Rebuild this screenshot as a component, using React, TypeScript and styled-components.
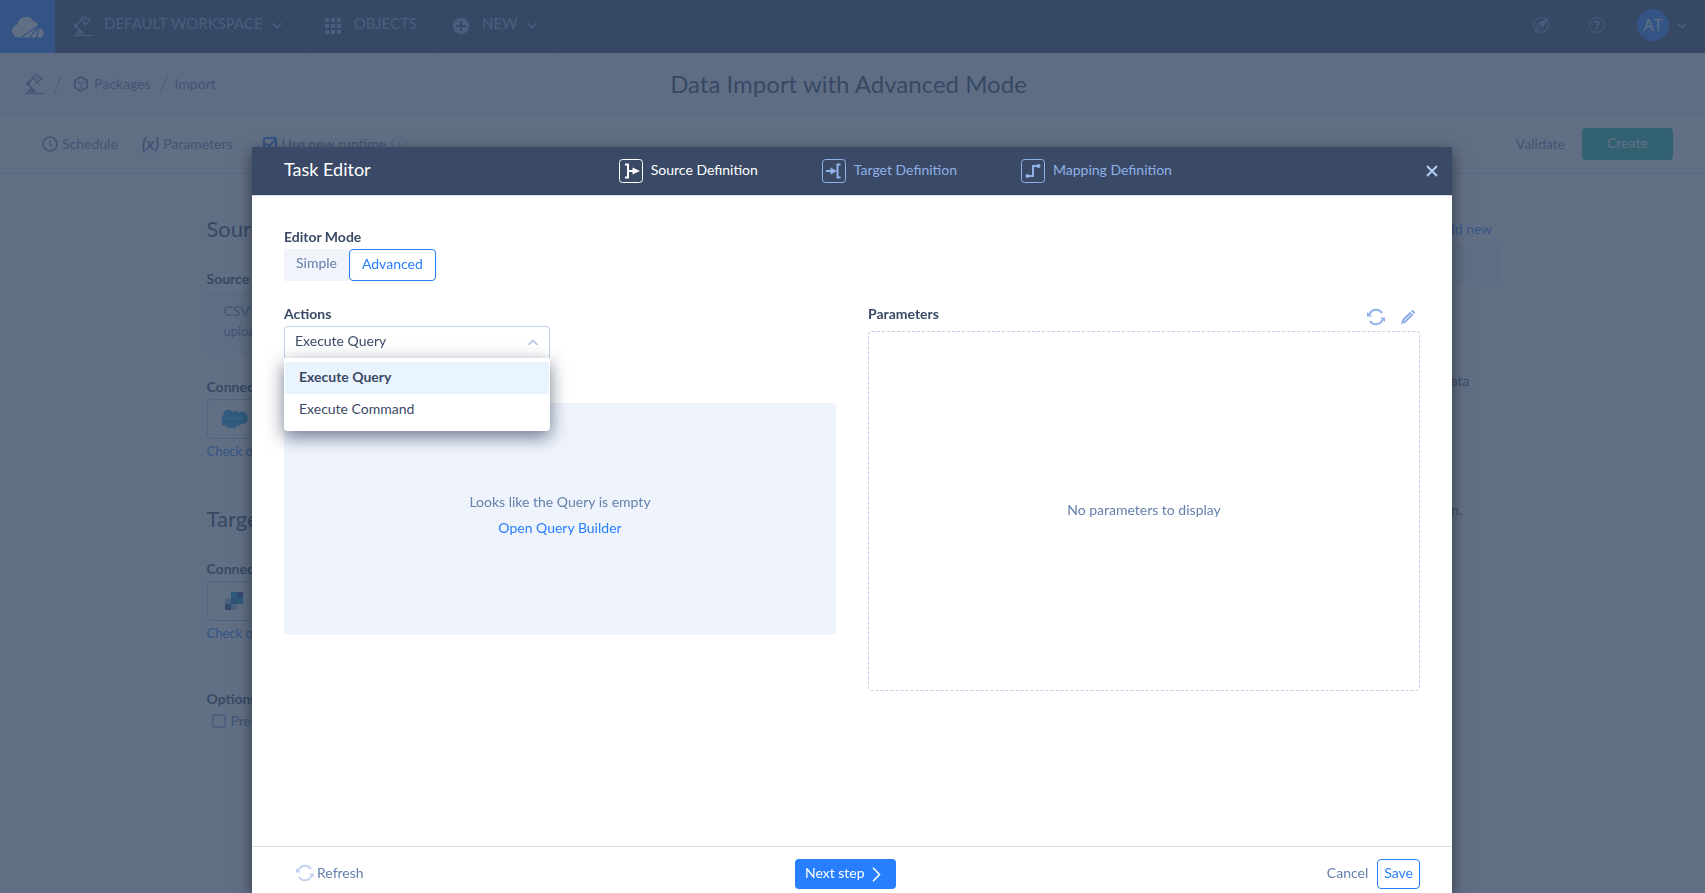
import React, { useState } from "react";
import styled, { createGlobalStyle, css } from "styled-components";

const Global = createGlobalStyle`
  *, *::before, *::after { box-sizing: border-box; }
  html, body, #root { height: 100%; }
  body { margin: 0; overflow: hidden; background: #fff; color: #3a4a66; font: 14px/20px Lato, "Liberation Sans", sans-serif; }
  button, input, select { font: inherit; color: inherit; }
  button { background: none; border: 0; padding: 0; cursor: pointer; }
  a { color: #277fff; text-decoration: none; }
  h1, h2, h3, p, ul { margin: 0; padding: 0; font-weight: 400; }
  svg { display: block; flex: none; }
`;

/* ---------- page behind the dialog ---------- */
const Page = styled.div`
  min-height: 100%;
`;
const TopBar = styled.header`
  display: flex;
  height: 53px;
  background: #3a4a66;
  color: #8eabdf;
`;
const Logo = styled.a`
  display: grid;
  place-items: center;
  width: 55px;
  background: #277fff;
`;
const NavButton = styled.button<{ $end?: number }>`
  display: flex;
  align-items: center;
  padding: 0 ${(p) => p.$end ?? 22}px 8px 18px;
  border-right: 1px solid #4a5c7c;
  font-size: 15px;
  > svg { margin-top: 6px; }
  > span { margin-left: 11px; }
  > span + svg { margin-left: 9px; }
`;
const NavRight = styled.div`
  display: flex;
  align-items: center;
  margin-left: auto;
  padding: 0 18px 3px 0;
`;
const IconButton = styled.button<{ $gap?: number }>`
  display: grid;
  place-items: center;
  color: inherit;
  margin-right: ${(p) => p.$gap ?? 0}px;
`;
const Avatar = styled.span`
  display: grid;
  place-items: center;
  width: 32px;
  height: 32px;
  margin-right: 8px;
  border-radius: 50%;
  background: #277fff;
  color: #fff;
  font-family: "Open Sans", sans-serif;
  font-size: 16px;
`;
const TitleBar = styled.div`
  display: grid;
  grid-template-columns: 1fr auto 1fr;
  align-items: center;
  height: 64px;
  padding: 0 33px 2px 25px;
  background: #f0f4fb;
`;
const Crumbs = styled.nav`
  display: flex;
  align-items: center;
  color: #6480ad;
  a { display: flex; align-items: center; gap: 5px; color: inherit; }
  a ~ a { margin-left: 4px; }
`;
const PageTitle = styled.h1`
  font-size: 24px;
  line-height: 32px;
`;
const Toolbar = styled.div`
  display: flex;
  align-items: center;
  height: 57px;
  padding: 0 32px 2px 42px;
  border-bottom: 1px solid #d3dbe9;
  color: #6480ad;
`;
const ToolbarEnd = styled.div`
  display: flex;
  align-items: center;
  gap: 17px;
  margin-left: auto;
`;
const Tool = styled.button`
  display: flex;
  align-items: center;
  gap: 4px;
  margin-right: 24px;
`;
const Variable = styled.b`
  font-style: italic;
  font-size: 17px;
  font-weight: 700;
`;
const Tick = styled.input`
  appearance: none;
  width: 14px;
  height: 14px;
  margin: 0;
  border: 2px solid #a9bddf;
  border-radius: 2px;
`;
const RuntimeLabel = styled.label`
  display: flex;
  align-items: center;
  gap: 5px;
  margin-left: 6px;
`;
const RuntimeTick = styled.span`
  display: grid;
  width: 14px;
  > * { grid-area: 1 / 1; }
  input:checked { border-color: #277fff; }
  svg { color: #277fff; }
`;
const CreateButton = styled.button`
  width: 91px;
  height: 32px;
  padding-bottom: 2px;
  border-radius: 4px;
  background: #23bea0;
  color: #fff;
`;
const Content = styled.main`
  display: grid;
  grid-template-columns: 1fr 1fr;
  max-width: 1292px;
  margin: 0 auto;
  padding-top: 39px;
`;
const Section = styled.section<{ $top?: number }>`
  display: flex;
  flex-direction: column;
  align-items: flex-start;
  margin: ${(p) => p.$top ?? 0}px 0 42px;
`;
const SectionTitle = styled.h2`
  font-size: 22px;
  line-height: 32px;
  margin-bottom: 24px;
`;
const FieldLabel = styled.h3`
  font-size: 14px;
  line-height: 20px;
  font-weight: 700;
  margin-bottom: 2px;
`;
const SourceCard = styled.div`
  width: 600px;
  height: 63px;
  margin-bottom: 23px;
  padding: 10px 17px;
  background: #eef3f9;
  color: #6480ad;
  small { display: block; font-size: 13px; line-height: 20px; }
`;
const Connection = styled.button`
  display: flex;
  align-items: center;
  width: 600px;
  height: 40px;
  margin-bottom: 2px;
  padding: 0 14px;
  border: 1px solid #b4c7e7;
  border-radius: 4px;
`;
const HelpLink = styled.a`
  font-size: 13px;
`;
const Option = styled.label`
  display: flex;
  align-items: center;
  gap: 5px;
  padding: 0 5px;
  color: #6480ad;
`;
const Aside = styled.aside`
  display: flex;
  flex-direction: column;
  align-items: flex-end;
  padding-top: 6px;
  font-family: "Open Sans", "Noto Sans", sans-serif;
  font-size: 13px;
`;
const AsideLink = styled.a`
  margin: 0 7px 7px 0;
`;
const AsideStrip = styled.div`
  width: 100%;
  height: 36px;
  background: #eef3f9;
`;
const AsideText = styled.p`
  padding: 89px 29px 0 0;
  & + & { padding: 109px 36px 0 0; }
`;

/* ---------- dialog ---------- */
const Overlay = styled.div`
  position: fixed;
  inset: 0;
  display: flex;
  justify-content: center;
  padding: 147px 1px 0 0;
  background: rgba(54, 72, 100, 0.79);
`;
const Dialog = styled.div`
  display: flex;
  flex-direction: column;
  width: 1200px;
  max-width: 100%;
  background: #fff;
  box-shadow: 0 5px 15px rgba(0, 0, 0, 0.5);
`;
const DialogHeader = styled.header`
  display: flex;
  align-items: center;
  justify-content: space-between;
  height: 48px;
  padding: 0 8px 0 32px;
  background: #3a4a66;
`;
const DialogTitle = styled.h2`
  color: #fff;
  font-size: 18px;
  line-height: 24px;
  padding-bottom: 4px;
`;
const Steps = styled.nav`
  display: flex;
  gap: 64px;
`;
const Step = styled.button<{ $on?: boolean }>`
  display: flex;
  align-items: center;
  gap: 8px;
  color: ${(p) => (p.$on ? "#fff" : "#90b0e8")};
  span { padding-bottom: 2px; }
`;
const Close = styled.button`
  display: grid;
  place-items: center;
  width: 24px;
  height: 24px;
  color: #b4cdf5;
`;
const DialogBody = styled.div`
  flex: 1;
  display: grid;
  grid-template-columns: 1fr 1fr;
  grid-template-rows: auto auto 1fr;
  column-gap: 32px;
  padding: 31px 32px 32px;
  border-top: 1px solid #d9e1ef;
`;
const Mode = styled.div`
  grid-column: 1 / -1;
  margin-bottom: 23px;
`;
const Label = styled.label`
  display: block;
  font-weight: 700;
  margin-bottom: 2px;
`;
const Segments = styled.div`
  display: flex;
`;
const Segment = styled.button<{ $on?: boolean }>`
  height: 32px;
  padding: 0 12px 4px;
  background: #f1f4fa;
  color: #6480ad;
  ${(p) =>
    p.$on &&
    css`
      padding: 0 12px 2px;
      border: 1px solid #277fff;
      border-radius: 4px;
      background: #fff;
      color: #277fff;
    `}
`;
const Combo = styled.div`
  position: relative;
  width: 266px;
  margin-bottom: 45px;
`;
const ComboButton = styled.button`
  display: flex;
  align-items: center;
  justify-content: space-between;
  width: 100%;
  height: 32px;
  padding: 0 11px 4px 10px;
  border: 1px solid #c1d0eb;
  border-bottom: 0;
  border-radius: 4px 4px 0 0;
  color: #3a4a66;
  svg { margin-top: 3px; color: #a9c0e8; }
`;
const Menu = styled.ul`
  position: absolute;
  top: 100%;
  left: 0;
  right: 0;
  z-index: 2;
  padding: 4px 1px 5px;
  list-style: none;
  background: #fff;
  border-radius: 0 0 4px 4px;
  box-shadow: 0 6px 18px rgba(35, 50, 80, 0.65);
`;
const MenuItem = styled.li<{ $on?: boolean }>`
  height: 32px;
  padding: 5px 14px;
  background: ${(p) => (p.$on ? "#eaf4ff" : "#fff")};
  font-weight: ${(p) => (p.$on ? 700 : 400)};
`;
const Empty = styled.div`
  display: flex;
  flex-direction: column;
  align-items: center;
  justify-content: center;
  gap: 6px;
  height: 232px;
  padding-bottom: 8px;
  border-radius: 4px;
  background: #eff4fc;
  color: #6480ad;
`;
const ParamHead = styled.div`
  display: flex;
  justify-content: space-between;
  align-items: flex-start;
  height: 27px;
`;
const ParamTools = styled.div`
  display: flex;
  align-items: center;
  gap: 16px;
  padding: 4px 5px 0 0;
  color: #90b0e8;
`;
const ParamBox = styled.div`
  display: grid;
  place-items: center;
  height: 360px;
  padding-bottom: 2px;
  border: 1px dashed #bdd0e8;
  border-radius: 4px;
  color: #6480ad;
`;
const DialogFooter = styled.footer`
  display: flex;
  justify-content: space-between;
  align-items: center;
  padding: 12px 32px 4px 44px;
  border-top: 1px solid #d9dee8;
  color: #6480ad;
`;
const RefreshButton = styled.button`
  display: flex;
  align-items: center;
  gap: 3px;
  padding-bottom: 2px;
  svg { color: #c3d3ee; }
`;
const Next = styled.button`
  display: flex;
  align-items: center;
  gap: 7px;
  height: 30px;
  padding: 0 15px 0 10px;
  border-radius: 4px;
  background: #277fff;
  color: #fff;
  span { padding-bottom: 2px; }
`;
const FooterEnd = styled.div`
  display: flex;
  align-items: center;
  gap: 9px;
`;
const Cancel = styled.button`
  height: 30px;
  padding-bottom: 2px;
`;
const Save = styled.button`
  height: 30px;
  padding: 0 6px 2px;
  border: 1px solid #277fff;
  border-radius: 4px;
  color: #277fff;
`;

/* ---------- icons ---------- */
const Lamp = () => (
  <svg width="20" height="20" viewBox="0 0 20 20" fill="none" stroke="currentColor">
    <path d="M0 19.500h20" />
    <path d="M3 9.500l5.200-5.500M3 10l4.500 5.500" strokeWidth="1.500" />
    <circle cx="3" cy="9.500" r="2.100" fill="currentColor" stroke="none" />
    <path d="M3.500 17.500c.5-1.600 2-2.300 3.500-2.300s2.800.8 3.200 2.300z" strokeWidth="1.300" />
    <path d="M8 4l1.500-2.700 2.300-.2 1.500 1.700 3.700 1.400-5.500 5-1-4.200z" strokeWidth="1.300" />
  </svg>
);
const Chevron = ({ up }: { up?: boolean }) => (
  <svg width="10" height="7" viewBox="0 0 10 7" fill="none" stroke="currentColor" strokeWidth="1.600">
    <path d={up ? "M.6 5.700L5 1.300l4.400 4.400" : "M.6 1.200L5 5.600l4.400-4.400"} />
  </svg>
);
const Slash = () => (
  <svg width="24" height="20" viewBox="0 0 24 20" stroke="#a9bddf" strokeWidth="1.500">
    <path d="M9.500 19.500l7-19" />
  </svg>
);
const Refresh = () => (
  <svg width="18" height="18" viewBox="0 0 18 18" fill="none" stroke="currentColor" strokeWidth="2">
    <path d="M2.500 6.500A7 7 0 0 1 15 5M15.500 11.500A7 7 0 0 1 3 13" />
    <path d="M0 4v4.500h5zM18 14V9.500h-5z" fill="currentColor" stroke="none" />
  </svg>
);
const StepIcon = ({ children }: { children: React.ReactNode }) => (
  <svg width="24" height="24" viewBox="0 0 24 24" fill="none" stroke="currentColor">
    <rect x=".5" y=".5" width="23" height="23" rx="3" />
    {children}
  </svg>
);

export default function App() {
  const [mode, setMode] = useState("Advanced");
  const [action, setAction] = useState("Execute Query");
  return (
    <>
      <Global />
      <Page>
        <TopBar>
          <Logo href="#" aria-label="Home">
            <svg width="32" height="22" viewBox="0 0 32 22">
              <path fill="#fff" d="M6 21.500A6.500 6.500 0 0 1 5.500 8.600a8.500 8.500 0 0 1 15.800-3.500 6.500 6.500 0 0 1 5.500 6.900A5 5 0 0 1 31.500 17c0 2.500-1 4.500-3 4.500z" />
              <path d="M8 22L27.500 9M17.500 22L27.500 9.500M24.500 22L27.500 9.500" stroke="#277fff" strokeWidth="1.300" />
            </svg>
          </Logo>
          <NavButton>
            <Lamp />
            <span>DEFAULT WORKSPACE</span>
            <Chevron />
          </NavButton>
          <NavButton $end={15}>
            <svg width="20" height="16" viewBox="0 0 20 16" fill="currentColor">
              {[0, 6, 12].map((y) => [2, 8, 14].map((x) => <rect key={`${x}-${y}`} x={x} y={y} width="4" height="4" />))}
            </svg>
            <span>OBJECTS</span>
          </NavButton>
          <NavButton>
            <svg width="20" height="16" viewBox="0 0 20 16">
              <circle cx="10" cy="8" r="8" fill="currentColor" />
              <path d="M10 3v10M5 8h10" stroke="#3a4a66" strokeWidth="2" />
            </svg>
            <span>NEW</span>
            <Chevron />
          </NavButton>
          <NavRight>
            <IconButton aria-label="Explore" $gap={40}>
              <svg width="16" height="16" viewBox="0 0 16 16" fill="none" stroke="currentColor">
                <circle cx="8" cy="8" r="7.400" />
                <path d="M14.500 1.500L9.800 10 6 6.200z" fill="currentColor" />
                <path d="M6 6.200L2 14l7.800-4" />
              </svg>
            </IconButton>
            <IconButton aria-label="Help" $gap={32}>
              <svg width="16" height="16" viewBox="0 0 16 16" fill="none" stroke="currentColor">
                <circle cx="8" cy="8" r="7.400" />
                <path d="M6 6.500c0-2.800 4-2.600 4-.3 0 1.500-2 1.300-2 3M8 10.500v1.700" strokeWidth="1.600" />
              </svg>
            </IconButton>
            <Avatar>AT</Avatar>
            <IconButton aria-label="Account menu">
              <Chevron />
            </IconButton>
          </NavRight>
        </TopBar>
        <TitleBar>
          <Crumbs>
            <a href="#" aria-label="Workspace"><Lamp /></a>
            <Slash />
            <a href="#">
              <svg width="16" height="16" viewBox="0 0 16 16" fill="none" stroke="currentColor" strokeWidth="1.800">
                <path d="M8 1l6.200 3.500v7L8 15l-6.200-3.500v-7z" />
                <path d="M4 5.800L8 8l4-2.200M8 8v5" strokeWidth="1" />
              </svg>
              Packages
            </a>
            <Slash />
            <span>Import</span>
          </Crumbs>
          <PageTitle>Data Import with Advanced Mode</PageTitle>
        </TitleBar>
        <Toolbar>
          <Tool>
            <svg width="16" height="16" viewBox="0 0 16 16" fill="none" stroke="currentColor" strokeWidth="1.700">
              <circle cx="8" cy="8" r="7" />
              <path d="M8 4v4.300l2.500 2" strokeWidth="1.200" />
            </svg>
            Schedule
          </Tool>
          <Tool><Variable>(x)</Variable>Parameters</Tool>
          <RuntimeLabel>
            <RuntimeTick>
              <Tick type="checkbox" defaultChecked />
              <svg width="14" height="14" viewBox="0 0 14 14" fill="none" stroke="currentColor" strokeWidth="2">
                <path d="M3 6.500l3 3L13 2" />
              </svg>
            </RuntimeTick>
            Use new runtime
            <svg width="16" height="16" viewBox="0 0 16 16" fill="none" stroke="#a9bddf">
              <circle cx="8" cy="8" r="7.300" />
              <path d="M8 7v5M8 4v1.500" strokeWidth="1.300" />
            </svg>
          </RuntimeLabel>
          <ToolbarEnd>
            <button>Validate</button>
            <CreateButton>Create</CreateButton>
          </ToolbarEnd>
        </Toolbar>
        <Content>
          <div>
            <Section>
              <SectionTitle>Source</SectionTitle>
              <FieldLabel>Source type</FieldLabel>
              <SourceCard>CSV<small>upload</small></SourceCard>
              <FieldLabel>Connection</FieldLabel>
              <Connection aria-label="Salesforce connection">
                <svg width="26" height="18" viewBox="0 0 26 18">
                  <path fill="#10a0dd" d="M5 15.500A5 5 0 0 1 1.500 6 5 5 0 0 1 10.500 2a5 5 0 0 1 6.500.8A5.300 5.300 0 0 1 25.500 8a5 5 0 0 1-6 5.800 4 4 0 0 1-5 1.600 4.500 4.500 0 0 1-9.500.1z" />
                  <path d="M4 8.500h18" stroke="#8fd0f0" strokeWidth="1.500" strokeDasharray="1.500 .7" />
                </svg>
              </Connection>
              <HelpLink href="#">Check out</HelpLink>
            </Section>
            <Section>
              <SectionTitle>Target</SectionTitle>
              <FieldLabel>Connection</FieldLabel>
              <Connection aria-label="Target connection">
                <svg width="24" height="18" viewBox="0 0 24 18">
                  <path fill="#10a0cc" d="M9 0h6v6H9zM15 6h6v6h-6z" />
                  <path fill="#2f4f90" d="M15 0h6v6h-6zM3 12h6v6H3z" />
                  <path fill="#1c79b8" d="M9 6h6v6H9z" />
                  <path fill="#8fc0dd" d="M3 6h6v6H3zM9 12h6v6H9z" />
                </svg>
              </Connection>
              <HelpLink href="#">Check out</HelpLink>
            </Section>
            <Section $top={46}>
              <FieldLabel>Options</FieldLabel>
              <Option><Tick type="checkbox" />Preserve</Option>
            </Section>
          </div>
          <Aside>
            <AsideLink href="#">Add new</AsideLink>
            <AsideStrip />
            <AsideText>data</AsideText>
            <AsideText>connection.</AsideText>
          </Aside>
        </Content>
      </Page>

      <Overlay>
        <Dialog role="dialog" aria-labelledby="dialog-title">
          <DialogHeader>
            <DialogTitle id="dialog-title">Task Editor</DialogTitle>
            <Steps>
              <Step $on>
                <StepIcon>
                  <path d="M6 5.500h3v13H6M9 12h6" strokeWidth="2" />
                  <path d="M13.500 8.500L21 12l-7.500 3.500z" fill="currentColor" stroke="none" />
                </StepIcon>
                <span>Source Definition</span>
              </Step>
              <Step>
                <StepIcon>
                  <path d="M18.500 5.500h-3v13h3M4 12h6" strokeWidth="2" />
                  <path d="M8.500 8.500L15 12l-6.500 3.500z" fill="currentColor" stroke="none" />
                </StepIcon>
                <span>Target Definition</span>
              </Step>
              <Step>
                <StepIcon>
                  <path d="M6.500 17h5.500V7h5.500" strokeWidth="2" />
                  <circle cx="6.500" cy="17" r="2" fill="currentColor" stroke="none" />
                  <circle cx="17.500" cy="7" r="2" fill="currentColor" stroke="none" />
                </StepIcon>
                <span>Mapping Definition</span>
              </Step>
            </Steps>
            <Close aria-label="Close">
              <svg width="12" height="12" viewBox="0 0 12 12" stroke="currentColor" strokeWidth="2">
                <path d="M1 1l10 10M11 1L1 11" />
              </svg>
            </Close>
          </DialogHeader>
          <DialogBody>
            <Mode>
              <Label as="div">Editor Mode</Label>
              <Segments>
                {["Simple", "Advanced"].map((m) => (
                  <Segment key={m} $on={m === mode} onClick={() => setMode(m)}>{m}</Segment>
                ))}
              </Segments>
            </Mode>
            <div>
              <Label id="actions-label" htmlFor="actions">Actions</Label>
              <Combo>
                <ComboButton id="actions" aria-haspopup="listbox" aria-expanded="true">
                  {action}
                  <Chevron up />
                </ComboButton>
                <Menu role="listbox" aria-labelledby="actions-label">
                  {["Execute Query", "Execute Command"].map((a) => (
                    <MenuItem key={a} role="option" aria-selected={a === action} $on={a === action} onClick={() => setAction(a)}>
                      {a}
                    </MenuItem>
                  ))}
                </Menu>
              </Combo>
              <Empty>
                <p>Looks like the Query is empty</p>
                <a href="#">Open Query Builder</a>
              </Empty>
            </div>
            <div>
              <ParamHead>
                <Label as="div">Parameters</Label>
                <ParamTools>
                  <IconButton aria-label="Refresh parameters"><Refresh /></IconButton>
                  <IconButton aria-label="Edit parameters">
                    <svg width="14" height="14" viewBox="0 0 14 14" fill="currentColor">
                      <path d="M0 14l1.200-4.500L9 1.700l3.300 3.300-7.800 7.800zM9.800 1l1-.8c.5-.4 1-.2 1.400.1l1.500 1.500c.4.400.4 1 0 1.400l-.8.9z" />
                      <path d="M3 11l7-7" stroke="#fff" strokeWidth=".8" />
                    </svg>
                  </IconButton>
                </ParamTools>
              </ParamHead>
              <ParamBox>No parameters to display</ParamBox>
            </div>
          </DialogBody>
          <DialogFooter>
            <RefreshButton><Refresh />Refresh</RefreshButton>
            <Next>
              <span>Next step</span>
              <svg width="9" height="15" viewBox="0 0 9 15" fill="none" stroke="currentColor" strokeWidth="1.600">
                <path d="M1 .8l6.500 6.700L1 14.200" />
              </svg>
            </Next>
            <FooterEnd>
              <Cancel>Cancel</Cancel>
              <Save>Save</Save>
            </FooterEnd>
          </DialogFooter>
        </Dialog>
      </Overlay>
    </>
  );
}
